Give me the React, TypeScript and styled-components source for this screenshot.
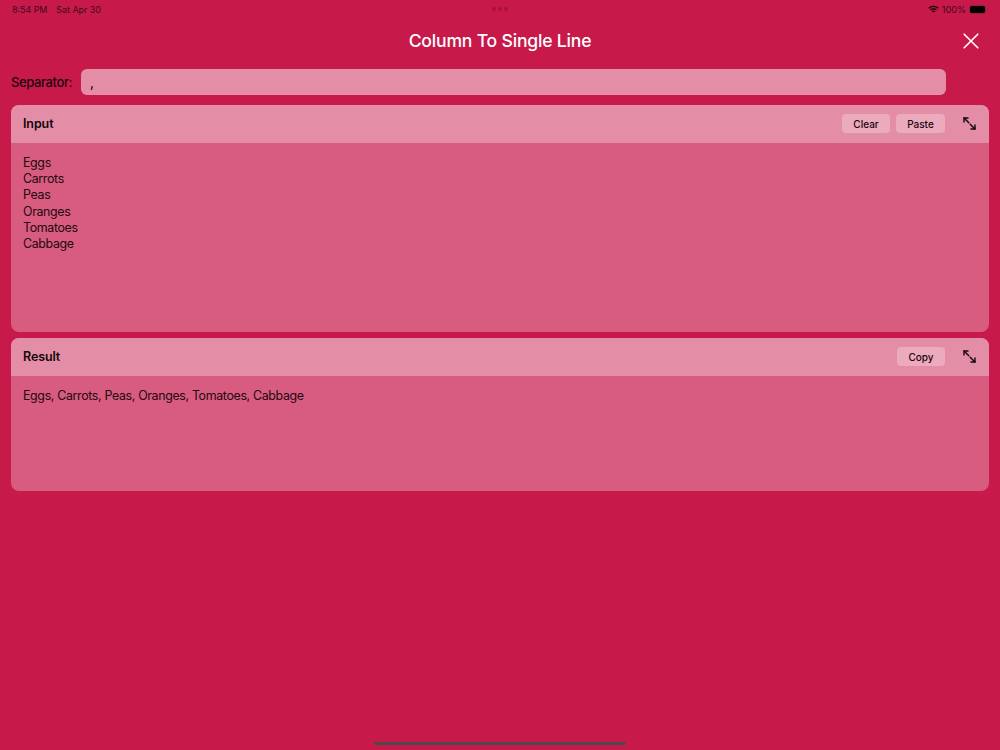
import styled, { createGlobalStyle } from "styled-components";

const GlobalStyle = createGlobalStyle`
  html, body {
    margin: 0;
    padding: 0;
    background: #c8194b;
  }
  * {
    box-sizing: border-box;
  }
`;

const Page = styled.div`
  width: 1000px;
  height: 750px;
  background: #c8194b;
  color: #000;
  font-family: Inter, "Liberation Sans", sans-serif;
  display: flex;
  flex-direction: column;
  overflow: hidden;
`;

const StatusBar = styled.div`
  height: 18px;
  padding: 0 14px 0 12px;
  display: flex;
  align-items: center;
  justify-content: space-between;
  font-size: 8.9px;
  color: #3d0a1a;
  position: relative;
`;

const StatusGroup = styled.div`
  display: flex;
  align-items: center;
  gap: 9px;
`;

const StatusRight = styled(StatusGroup)`
  gap: 3px;
  font-size: 9.2px;
`;

const Dots = styled.div`
  position: absolute;
  left: 492px;
  top: 7px;
  display: flex;
  gap: 2px;
`;

const Dot = styled.span`
  width: 4px;
  height: 4px;
  border-radius: 50%;
  background: #a8123c;
`;

const Battery = styled.div`
  width: 17px;
  height: 9px;
  padding: 1px;
  border-radius: 3px;
  background: #a11a42;
  position: relative;

  span {
    display: block;
    height: 100%;
    background: #000;
    border-radius: 2px;
  }

  &::after {
    content: "";
    position: absolute;
    right: -2px;
    top: 3px;
    width: 1px;
    height: 3px;
    background: #a11a42;
  }
`;

const TitleBar = styled.div`
  height: 46px;
  padding-bottom: 1px;
  display: flex;
  align-items: center;
  justify-content: center;
  position: relative;
`;

const Title = styled.h1`
  margin: 0;
  color: #fff;
  font-size: 17.6px;
  font-weight: 500;
  letter-spacing: -0.2px;
`;

const CloseButton = styled.button`
  position: absolute;
  right: 21px;
  top: 15px;
  width: 16px;
  height: 16px;
  padding: 0;
  border: 0;
  background: none;
  display: flex;
`;

const SeparatorRow = styled.div`
  margin-top: 5px;
  padding: 0 54px 0 11px;
  display: flex;
  align-items: center;
  gap: 9px;
`;

const SeparatorLabel = styled.label`
  width: 61px;
  font-size: 13px;
  font-weight: 500;
  letter-spacing: -0.4px;
  color: #1c0610;
  white-space: nowrap;
`;

const SeparatorField = styled.div`
  flex: 1;
  height: 26px;
  border-radius: 6px;
  background: #e38ea6;
  padding: 0 9px;
  font-size: 13px;
  font-weight: 500;
  line-height: 29px;
  color: #1c0610;
`;

const Panels = styled.div`
  margin-top: 10px;
  padding: 0 11px;
  display: flex;
  flex-direction: column;
  gap: 6px;
`;

const Panel = styled.section<{ $height: number }>`
  height: ${(p) => p.$height}px;
  border-radius: 8px;
  overflow: hidden;
  background: #d85c80;
  display: flex;
  flex-direction: column;
`;

const PanelHeader = styled.div`
  height: 38px;
  flex: none;
  background: #e38ea6;
  padding: 0 13px 1px 12px;
  display: flex;
  align-items: center;
  gap: 6px;
`;

const PanelTitle = styled.h2`
  margin: 0 auto 0 0;
  font-size: 12.5px;
  font-weight: 600;
  letter-spacing: -0.1px;
  color: #14060b;
`;

const ActionButton = styled.button<{ $width: number }>`
  width: ${(p) => p.$width}px;
  height: 19px;
  padding: 0;
  border: 0;
  border-radius: 4px;
  background: #ecaabd;
  font-family: inherit;
  font-size: 10px;
  font-weight: 500;
  color: #1c0610;
`;

const ExpandButton = styled.button`
  width: 13px;
  height: 13px;
  padding: 0;
  margin-left: 12px;
  border: 0;
  background: none;
  display: flex;
`;

const PanelBody = styled.div`
  padding: 12px 11px 12px 12px;
  font-size: 12.4px;
  line-height: 16.2px;
  letter-spacing: -0.34px;
  color: #24070f;
`;

const HomeIndicator = styled.div`
  width: 252px;
  height: 3px;
  margin: auto auto 5px;
  border-radius: 2px;
  background: #4f4a4a;
`;

const WifiIcon = () => (
  <svg width="11" height="9" viewBox="0 0 22 16" fill="none" stroke="#1a0509" strokeWidth="2.6">
    <path d="M1.5 5.5a14 14 0 0 1 19 0" />
    <path d="M5 9.2a9 9 0 0 1 12 0" />
    <path d="M8.2 12.6a4.4 4.4 0 0 1 5.6 0" />
  </svg>
);

const CloseIcon = () => (
  <svg width="16" height="16" viewBox="0 0 16 16" fill="none" stroke="#fff" strokeWidth="1.6" strokeLinecap="round">
    <path d="M1.2 1.2l13.6 13.6M14.8 1.2L1.2 14.8" />
  </svg>
);

const ExpandIcon = () => (
  <svg width="13" height="13" viewBox="0 0 13 13" fill="none" stroke="#14060b" strokeWidth="1.4" strokeLinecap="round" strokeLinejoin="round">
    <path d="M1 1l4.8 4.8M7.2 7.2L12 12" />
    <path d="M1 5V1h4" />
    <path d="M12 8v4H8" />
  </svg>
);

const inputLines = ["Eggs", "Carrots", "Peas", "Oranges", "Tomatoes", "Cabbage"];

export default function App() {
  return (
    <Page>
      <GlobalStyle />
      <StatusBar>
        <StatusGroup>
          <span>8:54 PM</span>
          <span>Sat Apr 30</span>
        </StatusGroup>
        <Dots>
          <Dot />
          <Dot />
          <Dot />
        </Dots>
        <StatusRight>
          <WifiIcon />
          <span>100%</span>
          <Battery>
            <span />
          </Battery>
        </StatusRight>
      </StatusBar>

      <TitleBar>
        <Title>Column To Single Line</Title>
        <CloseButton aria-label="Close">
          <CloseIcon />
        </CloseButton>
      </TitleBar>

      <SeparatorRow>
        <SeparatorLabel>Separator:</SeparatorLabel>
        <SeparatorField>,</SeparatorField>
      </SeparatorRow>

      <Panels>
        <Panel $height={227}>
          <PanelHeader>
            <PanelTitle>Input</PanelTitle>
            <ActionButton $width={48}>Clear</ActionButton>
            <ActionButton $width={49}>Paste</ActionButton>
            <ExpandButton aria-label="Expand input">
              <ExpandIcon />
            </ExpandButton>
          </PanelHeader>
          <PanelBody>
            {inputLines.map((line) => (
              <div key={line}>{line}</div>
            ))}
          </PanelBody>
        </Panel>

        <Panel $height={153}>
          <PanelHeader>
            <PanelTitle>Result</PanelTitle>
            <ActionButton $width={48}>Copy</ActionButton>
            <ExpandButton aria-label="Expand result">
              <ExpandIcon />
            </ExpandButton>
          </PanelHeader>
          <PanelBody>Eggs, Carrots, Peas, Oranges, Tomatoes, Cabbage</PanelBody>
        </Panel>
      </Panels>

      <HomeIndicator />
    </Page>
  );
}
